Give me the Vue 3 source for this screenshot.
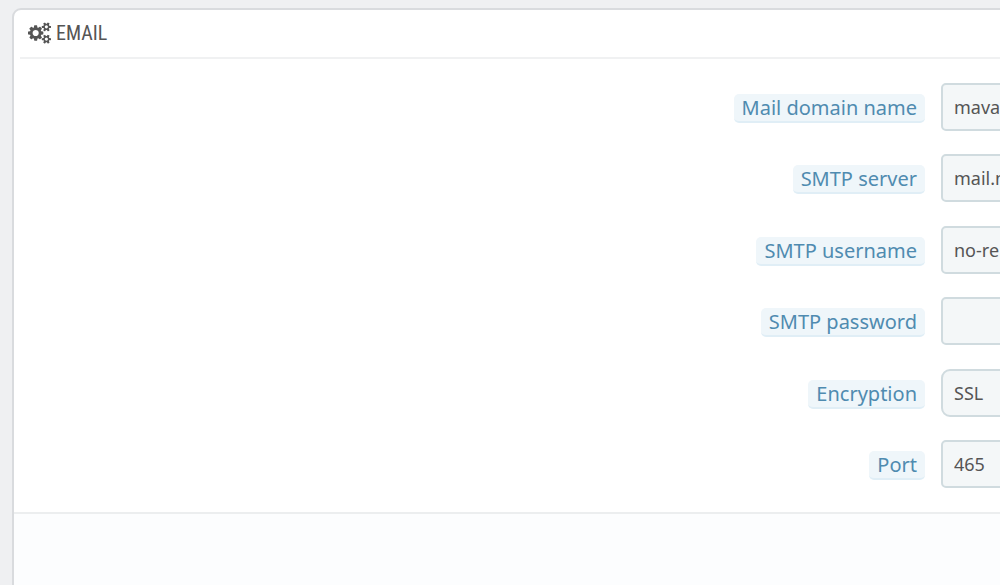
<script setup>
import { reactive } from 'vue'

const fields = reactive([
  { id: 'domain', label: 'Mail domain name', type: 'text', value: 'mava' },
  { id: 'server', label: 'SMTP server', type: 'text', value: 'mail.m' },
  { id: 'username', label: 'SMTP username', type: 'text', value: 'no-re' },
  { id: 'password', label: 'SMTP password', type: 'password', value: '' },
  { id: 'encryption', label: 'Encryption', type: 'select', value: 'SSL' },
  { id: 'port', label: 'Port', type: 'text', value: '465' }
])
</script>

<template>
  <main class="page">
    <form class="panel" @submit.prevent>
      <h1 class="heading">
        <svg class="cogs" viewBox="0 0 1920 1792" aria-hidden="true">
          <path d="M896 896q0-106-75-181t-181-75-181 75-75 181 75 181 181 75 181-75 75-181zm768 512q0-52-38-90t-90-38-90 38-38 90q0 53 37.500 90.500t90.500 37.500 90.500-37.500 37.500-90.500zm0-1024q0-52-38-90t-90-38-90 38-38 90q0 53 37.500 90.500t90.500 37.500 90.500-37.500 37.500-90.500zm-384 421v185q0 10-7 19.500t-16 10.500l-155 24q-11 35-32 76 34 48 90 115 7 11 7 20 0 12-7 19-23 30-82.500 89.500t-78.500 59.500q-11 0-21-7l-115-90q-37 19-77 31-11 108-23 155-7 24-30 24h-186q-11 0-20-7.500t-10-17.500l-23-153q-34-10-75-31l-118 89q-7 7-20 7-11 0-21-8-144-133-144-160 0-9 7-19 10-14 41-53t47-61q-23-44-35-82l-152-24q-10-1-17-9.500t-7-19.500v-185q0-10 7-19.500t16-10.500l155-24q11-35 32-76-34-48-90-115-7-11-7-20 0-12 7-20 22-30 82-89t79-59q11 0 21 7l115 90q34-18 77-32 11-108 23-154 7-24 30-24h186q11 0 20 7.500t10 17.500l23 153q34 10 75 31l118-89q8-7 20-7 11 0 21 8 144 133 144 160 0 8-7 19-12 16-42 54t-45 60q23 48 34 82l152 23q10 2 17 10.500t7 19.500zm640 533v140q0 16-149 31-12 27-30 52 51 113 51 138 0 4-4 7-122 71-124 71-8 0-46-47t-52-68q-20 2-30 2t-30-2q-14 21-52 68t-46 47q-2 0-124-71-4-3-4-7 0-25 51-138-18-25-30-52-149-15-149-31v-140q0-16 149-31 13-29 30-52-51-113-51-138 0-4 4-7 4-2 35-20t59-34 30-16q8 0 46 46.500t52 67.500q20-2 30-2t30 2q51-71 92-112l6-2q4 0 124 70 4 3 4 7 0 25-51 138 17 23 30 52 149 15 149 31zm0-1024v140q0 16-149 31-12 27-30 52 51 113 51 138 0 4-4 7-122 71-124 71-8 0-46-47t-52-68q-20 2-30 2t-30-2q-14 21-52 68t-46 47q-2 0-124-71-4-3-4-7 0-25 51-138-18-25-30-52-149-15-149-31v-140q0-16 149-31 13-29 30-52-51-113-51-138 0-4 4-7 4-2 35-20t59-34 30-16q8 0 46 46.500t52 67.500q20-2 30-2t30 2q51-71 92-112l6-2q4 0 124 70 4 3 4 7 0 25-51 138 17 23 30 52 149 15 149 31z" />
        </svg>
        <span>EMAIL</span>
      </h1>

      <div class="fields">
        <div v-for="field in fields" :key="field.id" class="row">
          <div class="label-cell">
            <label class="label" :for="field.id">{{ field.label }}</label>
          </div>
          <select v-if="field.type === 'select'" :id="field.id" v-model="field.value" class="control select">
            <option>SSL</option>
          </select>
          <input v-else :id="field.id" v-model="field.value" class="control" :type="field.type" autocomplete="off">
        </div>
      </div>

      <footer class="footer"></footer>
    </form>
  </main>
</template>

<style>
body {
  background: #eff0f2;
}
</style>

<style scoped>
.page {
  box-sizing: border-box;
  display: flex;
  height: 100vh;
  padding: 8px 0 0 12px;
  overflow: hidden;
  font-family: "Noto Sans", "Open Sans", sans-serif;
}

.panel {
  flex: 1;
  display: flex;
  flex-direction: column;
  min-width: 0;
  margin-right: -40px;
  margin-bottom: -20px;
  background: #fff;
  border: 2px solid #d9dbde;
  border-radius: 9px;
  overflow: hidden;
}

.heading {
  display: flex;
  align-items: center;
  gap: 5px;
  height: 45px;
  margin: 0 0 0 6px;
  padding: 0 0 2px 8px;
  border-bottom: 2px solid #f0f1f2;
  color: #555;
  font-family: "Ubuntu Condensed", "Roboto Condensed", "Open Sans Condensed", "DejaVu Sans Condensed", sans-serif;
  font-size: 20px;
  font-weight: 400;
  line-height: 30px;
}

.cogs {
  flex: none;
  width: 23px;
  height: 22px;
  fill: #555;
}

.fields {
  display: grid;
  align-content: space-between;
  min-height: 405px;
  padding: 24px 0;
}

.row {
  display: grid;
  grid-template-columns: 1fr 97px;
  column-gap: 16px;
}

.label-cell {
  display: flex;
  justify-content: flex-end;
  align-items: center;
  padding-top: 3px;
}

.label {
  padding: 0 8px;
  background: #eff6fa;
  border-bottom: 2px solid #e0eef6;
  border-radius: 5px;
  color: #4f8bb0;
  font-size: 20px;
  line-height: 27px;
}

.control {
  box-sizing: border-box;
  width: 100%;
  height: 48px;
  margin: 0;
  padding: 0 11px;
  appearance: none;
  background: #f4f7f8;
  border: 2px solid #d0dbdf;
  border-radius: 5px;
  outline: none;
  color: #555;
  font-family: inherit;
  font-size: 18px;
}

.select {
  border-radius: 9px;
}

.footer {
  flex: 1;
  background: #fcfdfe;
  border-top: 2px solid #eceeef;
}
</style>
